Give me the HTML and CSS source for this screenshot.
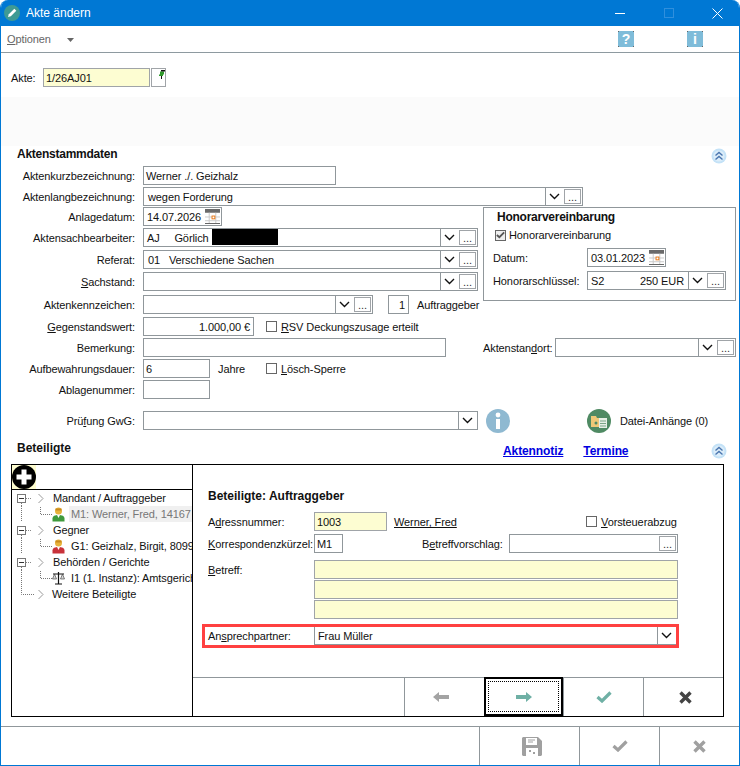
FILE: index.html
```html
<!doctype html>
<html lang="de">
  <head>
    <meta charset="UTF-8" />
    <meta name="viewport" content="width=device-width, initial-scale=1.0" />
    <title>Akte ändern</title>
    <link rel="stylesheet" href="styles.css">
  </head>
  <body>
    <svg class="defs" width="0" height="0">
      <symbol id="chev" viewBox="0 0 11 7"><path d="M1 1l4.500 4.500L10 1" fill="none" stroke="#111" stroke-width="1.400"/></symbol>
      <symbol id="collapse" viewBox="0 0 16 16"><circle cx="8" cy="8" r="7.500" fill="#c4e2f7"/><circle cx="8" cy="8" r="5.500" fill="#dcedf9"/><path d="M4.500 7.500L8 4.500l3.500 3M4.500 11.500L8 8.500l3.500 3" fill="none" stroke="#4a76b0" stroke-width="1.400"/></symbol>
      <symbol id="cal" viewBox="0 0 16 16"><rect x="0" y="0" width="16" height="16" fill="#fff"/><rect x="0" y="0" width="16" height="4" fill="#6a6a6a"/><path d="M0 8.500h16M0 12.500h16M4.500 4v11M11.500 4v11" stroke="#c8c8c8"/><path d="M0 15.500h16" stroke="#555"/><rect x="7.500" y="7.500" width="3" height="3" fill="#fff" stroke="#e87511"/></symbol>
      <symbol id="person" viewBox="0 0 13 15"><circle cx="6.500" cy="4" r="3.500" fill="#e8b33c"/><path d="M3.500 1.500h6v2h-6z" fill="#c98a1e"/><path d="M.5 14.500v-3c0-2.500 2.500-3.500 6-3.500s6 1 6 3.500v3z" fill="currentColor"/><path d="M5 8h3l-1.500 3z" fill="#fff"/></symbol>
      <symbol id="tree-parent" viewBox="0 0 52 16"><path d="M20.500 13v3" stroke="#777" stroke-dasharray="1 1"/><rect x="16.500" y="4.500" width="8" height="8" fill="#fff" stroke="#777"/><path d="M18 8.500h5" stroke="#333"/><path d="M25 8.500h6" stroke="#888" stroke-dasharray="1 1"/><path d="M37.500 4l4.500 4.500-4.500 4.500" fill="none" stroke="#999"/></symbol>
      <symbol id="tree-child" viewBox="0 0 52 16"><path d="M20.500 0v16" stroke="#777" stroke-dasharray="1 1"/><path d="M39.500 1v7.500H52" fill="none" stroke="#777" stroke-dasharray="1 1"/></symbol>
      <symbol id="tree-last" viewBox="0 0 52 16"><path d="M20.500 0v8.500H33" fill="none" stroke="#777" stroke-dasharray="1 1"/><path d="M37.500 4l4.500 4.500-4.500 4.500" fill="none" stroke="#999"/></symbol>
      <symbol id="check" viewBox="0 0 16 12"><path d="M1.500 6l4.500 4 8.500-8.500" fill="none" stroke="currentColor" stroke-width="3.200"/></symbol>
      <symbol id="cross" viewBox="0 0 13 13"><path d="M1.500 1.500l10 10M11.500 1.500l-10 10" fill="none" stroke="currentColor" stroke-width="3.400"/></symbol>
    </svg>

    <div class="window">
      <div class="title-bar">
        <svg class="app-icon" viewBox="0 0 16 16" width="16" height="16"><circle cx="8" cy="8" r="8" fill="#3f9a94"/><path d="M4 12l.8-2.800 5.500-5.500 2 2-5.500 5.500z" fill="#fff"/></svg>
        <span class="title-text">Akte ändern</span>
        <div class="win-controls">
          <svg width="11" height="11" viewBox="0 0 11 11"><path d="M0 5.500h10" stroke="#fff"/></svg>
          <svg width="11" height="11" viewBox="0 0 11 11"><rect x=".5" y=".5" width="9" height="9" fill="none" stroke="#2f8fdd"/></svg>
          <svg width="11" height="11" viewBox="0 0 11 11"><path d="M.5.500l10 10M10.500.500l-10 10" stroke="#fff"/></svg>
        </div>
      </div>

      <div class="menu-bar">
        <span class="menu-item"><u>O</u>ptionen</span>
        <svg class="menu-arrow" width="7" height="4" viewBox="0 0 7 4"><path d="M0 0h7L3.500 4z" fill="#666"/></svg>
        <div class="menu-help">
          <span class="help-btn">?</span>
          <span class="help-btn">i</span>
        </div>
      </div>

      <div class="akte-row">
        <label class="akte-label">Akte:</label>
        <div class="field yellow akte-field">1/26AJ01</div>
        <div class="pin-btn">
          <svg width="7" height="9" viewBox="0 0 7 9"><path d="M2 1.500h4v3H5v1.500H1V4.500h1z" fill="#2f9a2c"/><path d="M3 0h4v1.500H3zM3 6h1v3H3z" fill="#111"/></svg>
        </div>
      </div>
      <div class="band"></div>

      <section class="stamm">
        <div class="section-head">
          <h2 class="tight">Aktenstammdaten</h2>
          <svg class="collapse" width="16" height="16"><use href="#collapse"/></svg>
        </div>

        <div class="form-grid">
          <label>Aktenkurzbezeichnung:</label>
          <div class="field w-kurz">Werner ./. Geizhalz</div>
          <span></span>

          <label>Aktenlangbezeichnung:</label>
          <div class="field combo span-2 w-lang">
            <span class="combo-text pad-1">wegen Forderung</span>
            <svg class="chev" width="11" height="7"><use href="#chev"/></svg>
            <span class="dots">...</span>
          </div>

          <label>Anlagedatum:</label>
          <div class="field date w-date">14.07.2026<svg width="15" height="15"><use href="#cal"/></svg></div>
          <div class="honorar">
            <h3 class="tight">Honorarvereinbarung</h3>
            <div class="check-line first"><span class="check on"><svg width="10" height="8"><use href="#check"/></svg></span>Honorarvereinbarung</div>
            <div class="honorar-row">
              <span class="h-label">Datum:</span>
              <div class="field date h-date">03.01.2023<svg width="15" height="15"><use href="#cal"/></svg></div>
            </div>
            <div class="honorar-row">
              <span class="h-label">Honorarschlüssel:</span>
              <div class="field combo h-combo">
                <span class="combo-text split"><span>S2</span><span>250 EUR</span></span>
                <svg class="chev" width="11" height="7"><use href="#chev"/></svg>
                <span class="dots">...</span>
              </div>
            </div>
          </div>

          <label>Aktensachbearbeiter:</label>
          <div class="field combo w-full">
            <span class="combo-text">AJ &nbsp;&nbsp;&nbsp;&nbsp;Görlich <span class="redact"></span></span>
            <svg class="chev" width="11" height="7"><use href="#chev"/></svg>
            <span class="dots">...</span>
          </div>

          <label>Referat:</label>
          <div class="field combo w-full">
            <span class="combo-text pad-1">01 &nbsp;&nbsp;Verschiedene Sachen</span>
            <svg class="chev" width="11" height="7"><use href="#chev"/></svg>
            <span class="dots">...</span>
          </div>

          <label><u>S</u>achstand:</label>
          <div class="field combo w-full">
            <span class="combo-text"></span>
            <svg class="chev" width="11" height="7"><use href="#chev"/></svg>
            <span class="dots">...</span>
          </div>

          <label>Aktenkennzeichen:</label>
          <div class="inline-row">
            <div class="field combo w-kenn">
              <span class="combo-text"></span>
              <svg class="chev" width="11" height="7"><use href="#chev"/></svg>
              <span class="dots">...</span>
            </div>
            <div class="field num w-count">1</div>
            <span class="count-label">Auftraggeber</span>
          </div>

          <label><u>G</u>egenstandswert:</label>
          <div class="inline-row span-2">
            <div class="field num w-wert">1.000,00 €</div>
            <div class="check-line rsv"><span class="check"></span><span><u>R</u>SV Deckungszusage erteilt</span></div>
          </div>

          <label>Bemerkung:</label>
          <div class="field w-bem"></div>
          <div class="inline-row standort">
            <span class="standort-label">Aktenstan<u>d</u>ort:</span>
            <div class="field combo w-standort">
              <span class="combo-text"></span>
              <svg class="chev" width="11" height="7"><use href="#chev"/></svg>
              <span class="dots">...</span>
            </div>
          </div>

          <label>Aufbewahrungsdauer:</label>
          <div class="inline-row">
            <div class="field w-small">6</div>
            <span class="jahre">Jahre</span>
            <div class="check-line"><span class="check"></span><span><u>L</u>ösch-Sperre</span></div>
          </div>
          <span></span>

          <label>Ablagenummer:</label>
          <div class="field w-small"></div>
          <span></span>

          <label>Prü<u>f</u>ung GwG:</label>
          <div class="inline-row span-2">
            <div class="field combo w-full">
              <span class="combo-text"></span>
              <svg class="chev" width="11" height="7"><use href="#chev"/></svg>
            </div>
            <svg class="info-big" width="24" height="24" viewBox="0 0 24 24"><circle cx="12" cy="12" r="12" fill="#8fb9d1"/><circle cx="12" cy="6" r="2.400" fill="#fff"/><rect x="10" y="10" width="4" height="10" fill="#fff"/></svg>
            <svg class="files-icon" width="24" height="24" viewBox="0 0 24 24"><circle cx="12" cy="12" r="12" fill="#4f8a63"/><path d="M4 7h5l1 2h6v9H4z" fill="#f0c877"/><rect x="12" y="9" width="8" height="10" fill="#e6efe6"/><path d="M13 12h6M13 14.500h6M13 17h6" stroke="#7aa586"/><circle cx="9" cy="14" r="1.500" fill="#4f8a63"/></svg>
            <span class="files-label">Datei-Anhänge (0)</span>
          </div>
        </div>
      </section>

      <section class="beteiligte">
        <div class="section-head bet-head">
          <h2>Beteiligte</h2>
          <a class="link" href="#">Aktennotiz</a>
          <a class="link" href="#">Termine</a>
          <svg class="collapse" width="16" height="16"><use href="#collapse"/></svg>
        </div>

        <div class="panel">
          <div class="tree-pane">
            <div class="plus-row">
              <svg width="24" height="24" viewBox="0 0 24 24"><rect width="24" height="24" fill="#fdfccf"/><circle cx="12" cy="12" r="12" fill="#000"/><path d="M12 4.500v15M4.500 12h15" stroke="#fff" stroke-width="5"/></svg>
            </div>
            <ul class="tree">
              <li><svg width="52" height="16"><use href="#tree-parent"/></svg><span>Mandant / Auftraggeber</span></li>
              <li class="picked"><svg width="52" height="16"><use href="#tree-child"/></svg><svg class="t-icon green" width="13" height="15"><use href="#person"/></svg><span class="t-child">M1: Werner, Fred, 14167</span></li>
              <li><svg width="52" height="16"><use href="#tree-parent"/></svg><span>Gegner</span></li>
              <li><svg width="52" height="16"><use href="#tree-child"/></svg><svg class="t-icon red" width="13" height="15"><use href="#person"/></svg><span class="t-child">G1: Geizhalz, Birgit, 8099</span></li>
              <li><svg width="52" height="16"><use href="#tree-parent"/></svg><span>Behörden / Gerichte</span></li>
              <li><svg width="52" height="16"><use href="#tree-child"/></svg><svg class="t-icon" width="13" height="15" viewBox="0 0 13 15"><path d="M6.500 1v12M1 3h11M3 13h7" stroke="#111" stroke-width="1.200"/><path d="M2.500 3L.5 8h4zM10.500 3l-2 5h4z" fill="#d9d9d9" stroke="#333" stroke-width=".6"/></svg><span class="t-child">I1 (1. Instanz): Amtsgerich</span></li>
              <li><svg width="52" height="16"><use href="#tree-last"/></svg><span class="last">Weitere Beteiligte</span></li>
            </ul>
          </div>

          <div class="detail-pane">
            <div class="detail-form">
              <h3>Beteiligte: Auftraggeber</h3>
              <div class="d-row">
                <label>A<u>d</u>ressnummer:</label>
                <div class="field yellow w-adr">1003</div>
                <span class="adr-name"><u>Werner, Fred</u></span>
                <div class="check-line"><span class="check"></span><span><u>V</u>orsteuerabzug</span></div>
              </div>
              <div class="d-row r-korr">
                <label><u>K</u>orrespondenzkürzel:</label>
                <div class="field w-korr">M1</div>
                <span class="betreffv">B<u>e</u>treffvorschlag:</span>
                <div class="field combo w-betreffv">
                  <span class="combo-text"></span>
                  <span class="dots">...</span>
                </div>
              </div>
              <div class="d-row r-betreff">
                <label><u>B</u>etreff:</label>
                <div class="betreff-lines">
                  <div class="field yellow"></div>
                  <div class="field yellow"></div>
                  <div class="field yellow"></div>
                </div>
              </div>
              <div class="ansprech">
                <label>An<u>s</u>prechpartner:</label>
                <div class="field combo w-ansprech">
                  <span class="combo-text">Frau Müller</span>
                  <svg class="chev" width="11" height="7"><use href="#chev"/></svg>
                </div>
              </div>
            </div>

            <div class="nav-bar">
              <button class="nav-btn back" type="button"><svg width="16" height="10" viewBox="0 0 16 10"><path d="M0 5l6-5v3h10v4H6v3z" fill="#a3a3a3"/></svg></button>
              <button class="nav-btn current" type="button"><span class="focus-ring"><svg width="16" height="10" viewBox="0 0 16 10"><path d="M16 5l-6-5v3H0v4h10v3z" fill="#6fb0a5"/></svg></span></button>
              <button class="nav-btn teal" type="button"><svg width="16" height="12"><use href="#check"/></svg></button>
              <button class="nav-btn dark" type="button"><svg width="13" height="13"><use href="#cross"/></svg></button>
            </div>
          </div>
        </div>
      </section>

      <div class="foot-bar">
        <button class="foot-btn save" type="button"><svg width="20" height="19" viewBox="0 0 20 19"><path d="M1 0h15l4 4v14l-1 1H1l-1-1V1z" fill="#a0a0a0"/><rect x="4" y="1" width="11" height="7" fill="#fff"/><path d="M6 3h7M6 5h5" stroke="#a0a0a0"/><rect x="4" y="11" width="12" height="8" fill="#fff"/><path d="M7 13h2v2H7zM11 15h2v2h-2z" fill="#a0a0a0"/></svg></button>
        <button class="foot-btn" type="button"><svg width="16" height="12"><use href="#check"/></svg></button>
        <button class="foot-btn" type="button"><svg width="13" height="13"><use href="#cross"/></svg></button>
      </div>
    </div>
  </body>
</html>
```

FILE: styles.css
```css
* {
  margin: 0;
  padding: 0;
  box-sizing: border-box;
  font-family: "Liberation Sans", Arial, sans-serif;
}

body {
  background: #fff;
  font-size: 11px;
  letter-spacing: -0.1px;
  color: #111;
}

.defs {
  position: absolute;
}

.window {
  width: 740px;
  height: 766px;
  display: flex;
  flex-direction: column;
  background: #fff;
  border-left: 1px solid #0078d4;
  border-right: 1px solid #0078d4;
  border-bottom: 1px solid #0078d4;
  border-radius: 8px 8px 0 0;
  overflow: hidden;
}

/* title + menu */
.title-bar {
  height: 26px;
  flex: none;
  margin: 0 -1px;
  padding-left: 4px;
  display: flex;
  align-items: center;
  background: #0078d4;
  color: #fff;
}

.title-text {
  margin-left: 6px;
  font-size: 12px;
  letter-spacing: 0;
}

.win-controls {
  margin-left: auto;
  width: 125px;
  display: flex;
  justify-content: space-between;
  padding-right: 17px;
}

.menu-bar {
  height: 27px;
  flex: none;
  display: flex;
  align-items: center;
  padding-left: 6px;
  border-bottom: 1px solid #8e9aa0;
}

.menu-item {
  width: 43px;
  color: #666;
}

.menu-arrow {
  margin-left: 17px;
  margin-top: 2px;
}

.menu-help {
  margin-left: auto;
  margin-right: 36px;
  display: flex;
  gap: 53px;
}

.help-btn {
  width: 16px;
  height: 16px;
  display: flex;
  align-items: center;
  justify-content: center;
  color: #fff;
  font-weight: 700;
  font-size: 14px;
  background:
    linear-gradient(#666, #666) 0 0 / 1px 1px no-repeat,
    linear-gradient(#666, #666) 100% 0 / 1px 1px no-repeat,
    linear-gradient(#666, #666) 0 100% / 1px 1px no-repeat,
    linear-gradient(#666, #666) 100% 100% / 1px 1px no-repeat,
    #7fbcd9;
}

/* akte row */
.akte-row {
  height: 44px;
  flex: none;
  padding: 15px 0 0 10px;
  display: flex;
  align-items: flex-start;
}

.akte-label {
  width: 32px;
  line-height: 20px;
}

.akte-field {
  width: 107px;
  padding-left: 3px;
}

.pin-btn {
  margin-left: 1px;
  width: 15px;
  height: 19px;
  border: 1px solid #a0a4a8;
  display: flex;
  justify-content: flex-end;
  padding-top: 1px;
}

.pin-btn svg {
  margin-right: 0;
}

.band {
  height: 49px;
  flex: none;
  background: #fbfbfb;
}

/* shared fields */
.field {
  height: 19px;
  line-height: 18px;
  border: 1px solid #90979b;
  background: #fff;
  padding-left: 2px;
  white-space: nowrap;
  overflow: hidden;
}

.yellow {
  background: #fdfdd2;
  border-color: #a0a4a8;
}

.combo {
  display: flex;
  align-items: center;
  padding-left: 0;
}

.combo-text {
  flex: 1;
  padding-left: 3px;
  min-width: 0;
}

.pad-1 {
  padding-left: 4px;
}

.combo .chev {
  flex: none;
  box-sizing: content-box;
  width: 11px;
  height: 7px;
  padding: 5px 4px 5px 3px;
  border-left: 1px solid #90979b;
}

.dots {
  flex: none;
  width: 17px;
  height: 15px;
  margin-right: 1px;
  border: 1px solid #a0a4a8;
  text-align: center;
  line-height: 14px;
  color: #333;
}

.date {
  display: flex;
  align-items: center;
  justify-content: space-between;
  padding-left: 3px;
  padding-right: 1px;
}

.num {
  text-align: right;
  padding-right: 3px;
}

.redact {
  display: inline-block;
  width: 66px;
  height: 16px;
  background: #000;
  vertical-align: top;
}

.check-line {
  display: flex;
  align-items: center;
  gap: 4px;
  height: 19px;
  white-space: nowrap;
}

.check {
  flex: none;
  width: 11px;
  height: 11px;
  border: 1px solid #666;
  background: #fff;
  display: flex;
  align-items: center;
  justify-content: center;
  color: #555;
}

.check.on {
  background: #eee;
}

/* aktenstammdaten */
.section-head {
  height: 20px;
  display: flex;
  align-items: center;
  padding-left: 16px;
}

.section-head h2 {
  font-size: 12px;
  font-weight: 700;
  letter-spacing: 0;
}

.section-head h2.tight,
.honorar h3.tight {
  letter-spacing: -0.25px;
}

.stamm h2 {
  margin-top: -5px;
}

.collapse {
  margin-left: auto;
  margin-right: 12px;
}

.form-grid {
  display: grid;
  grid-template-columns: 142px 340px 256px;
  grid-template-rows: 21px 20px 21px 22px 22px 23px 22px 21px 21px 21px 31px 28px;
  align-items: start;
}

.form-grid label {
  text-align: right;
  padding-right: 8px;
  line-height: 20px;
}

.span-2 {
  grid-column: span 2;
}

.w-kurz { width: 193px; }
.w-lang { width: 440px; }
.w-date { width: 79px; }
.w-full { width: 335px; }
.w-kenn { width: 230px; }
.w-count { width: 21px; margin-left: 15px; }
.count-label { margin-left: 8px; }
.w-wert { width: 111px; }
.w-bem { width: 303px; }
.w-small { width: 67px; }

.inline-row {
  display: flex;
  align-items: center;
  height: 19px;
}

.rsv { margin-left: 12px; }
.jahre { margin-left: 8px; width: 48px; }

.standort-label {
  width: 72px;
}

.w-standort { width: 181px; }

.info-big {
  margin-left: 8px;
  flex: none;
}

.files-icon {
  margin-left: 77px;
  flex: none;
}

.files-label {
  margin-left: 9px;
}

.honorar {
  grid-row: span 5;
  height: 94px;
  width: 253px;
  border: 1px solid #90979b;
  padding: 2px 9px;
}

.honorar h3 {
  font-size: 12px;
  font-weight: 700;
  padding-left: 4px;
  line-height: 15px;
}

.check-line.first {
  padding-left: 2px;
  height: 18px;
  margin-top: 1px;
  gap: 3px;
}

.honorar-row {
  display: flex;
  align-items: center;
  margin-top: 4px;
  height: 19px;
}

.h-label {
  width: 94px;
}

.h-date { width: 79px; }
.h-combo { width: 139px; }

.split {
  display: flex;
  justify-content: space-between;
  padding-right: 4px;
}

/* beteiligte */
.beteiligte {
  flex: none;
}

.bet-head {
  height: 18px;
}

.bet-head h2 {
  width: 486px;
}

.link {
  color: #0000e0;
  font-size: 12px;
  font-weight: 700;
  margin-top: 5px;
  margin-right: 20px;
}

.bet-head .collapse {
  margin-top: 5px;
}

.panel {
  margin: 7px 15px 0 10px;
  height: 253px;
  border: 1px solid #000;
  display: flex;
}

.tree-pane {
  width: 181px;
  flex: none;
  border-right: 1px solid #000;
  overflow: hidden;
}

.plus-row {
  height: 25px;
  border-bottom: 1px solid #000;
}

.plus-row svg {
  display: block;
}

.tree {
  list-style: none;
  margin-left: -11px;
}

.tree li {
  height: 16px;
  display: flex;
  align-items: center;
  white-space: nowrap;
  width: 192px;
}

.tree li > svg {
  flex: none;
}

.tree .last {
  margin-left: -1px;
}

.tree li > .t-icon {
  margin-left: -1px;
}

.t-icon.green { color: #3f9a3c; }
.t-icon.red { color: #c8323a; }

.t-child {
  margin-left: 6px;
}

.tree .picked {
  background: linear-gradient(to right, transparent 68px, #f0f0f0 68px);
  color: #777;
}

.detail-pane {
  flex: 1;
  display: flex;
  flex-direction: column;
}

.detail-form {
  flex: 1;
  padding: 24px 0 0 15px;
}

.detail-form h3 {
  font-size: 12px;
  font-weight: 700;
  letter-spacing: 0;
  line-height: 14px;
  margin-bottom: 9px;
}

.d-row {
  display: flex;
  align-items: flex-start;
  height: 19px;
}

.d-row label {
  width: 106px;
  line-height: 20px;
}

.r-korr { margin-top: 3px; }
.r-betreff { margin-top: 7px; height: 59px; }

.w-adr { width: 73px; }
.adr-name { margin-left: 7px; width: 192px; line-height: 20px; }
.w-korr { width: 29px; }
.betreffv { margin-left: 79px; width: 87px; line-height: 20px; }
.w-betreffv { width: 169px; }

.betreff-lines {
  width: 364px;
  display: flex;
  flex-direction: column;
  gap: 1px;
}

.ansprech {
  margin: 5px 0 0 -6px;
  width: 477px;
  height: 24px;
  border: 3px solid #ff4040;
  display: flex;
  align-items: center;
  padding-left: 3px;
}

.ansprech label {
  width: 106px;
}

.w-ansprech {
  flex: 1;
  height: 18px;
  border-width: 0 0 1px 1px;
}

.nav-bar {
  height: 39px;
  flex: none;
  display: flex;
  justify-content: flex-end;
  border-top: 1px solid #90979b;
}

.nav-btn {
  width: 80px;
  background: #fff;
  border: none;
  border-left: 1px solid #90979b;
  display: flex;
  align-items: center;
  justify-content: center;
}

.nav-btn.back {
  padding-right: 8px;
}

.nav-btn.current {
  width: 79px;
  border: 2px solid #000;
  margin-top: -1px;
  padding: 2px;
}

.focus-ring {
  width: 100%;
  height: 100%;
  border: 1px dotted #000;
  display: flex;
  align-items: center;
  justify-content: center;
}

.teal { color: #6fb0a5; }

.dark {
  color: #444;
  padding-left: 4px;
}

.foot-bar {
  margin-top: 9px;
  flex: 1;
  display: flex;
  justify-content: flex-end;
  border-top: 1px solid #90979b;
}

.foot-btn {
  width: 80px;
  background: #fff;
  border: none;
  border-left: 1px solid #90979b;
  color: #a0a0a0;
  display: flex;
  align-items: center;
  justify-content: center;
}

.foot-btn.save {
  width: 100px;
  padding-left: 4px;
}
```
